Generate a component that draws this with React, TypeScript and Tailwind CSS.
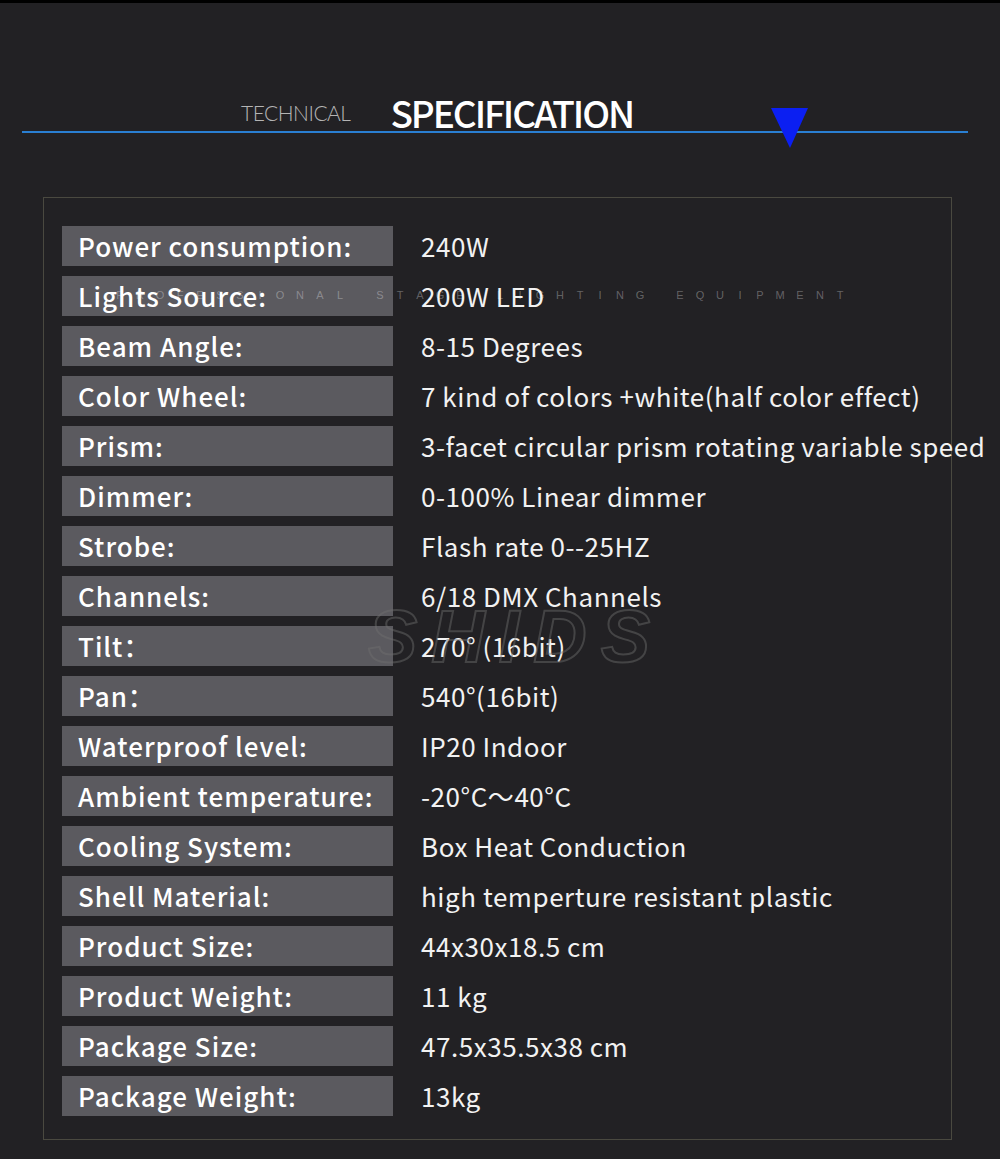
import React from "react";

const rows: [string, string][] = [
  ["Power consumption:", "240W"],
  ["Lights Source:", "200W LED"],
  ["Beam Angle:", "8-15 Degrees"],
  ["Color Wheel:", "7 kind of colors +white(half color effect)"],
  ["Prism:", "3-facet circular prism rotating variable speed"],
  ["Dimmer:", "0-100% Linear dimmer"],
  ["Strobe:", "Flash rate 0--25HZ"],
  ["Channels:", "6/18 DMX Channels"],
  ["Tilt：", "270° (16bit)"],
  ["Pan：", "540°(16bit)"],
  ["Waterproof level:", "IP20 Indoor"],
  ["Ambient temperature:", "-20°C～40°C"],
  ["Cooling System:", "Box Heat Conduction"],
  ["Shell Material:", "high temperture resistant plastic"],
  ["Product Size:", "44x30x18.5 cm"],
  ["Product Weight:", "11 kg"],
  ["Package Size:", "47.5x35.5x38 cm"],
  ["Package Weight:", "13kg"],
];

const wm = "PROFESSIONAL STAGE LIGHTING EQUIPMENT";

export default function App() {
  const font = { fontFamily: '"Noto Sans CJK SC", "Noto Sans", sans-serif' };
  return (
    <div className="relative w-[1000px] h-[1159px] bg-[#222124] overflow-hidden" style={font}>
      <div className="h-[3px] bg-black" />
      {/* header */}
      <div className="relative h-[194px]">
        <div className="flex items-end pt-[89px] h-[128px]">
          <span
            className="ml-[241px] text-[21px] leading-none text-[#b4b4b4] tracking-[-0.5px] mb-[8px]"
            style={{ fontFamily: 'Lato, "Open Sans", sans-serif', fontWeight: 300 }}
          >
            TECHNICAL
          </span>
          <span className="ml-[40px] text-[37px] font-medium leading-none text-white tracking-[-2.1px]">
            SPECIFICATION
          </span>
        </div>
        <div className="ml-[22px] w-[946px] h-[2px] bg-[#2a7fd2]" />
        <svg
          className="absolute left-[771px] top-[105px]"
          width="37"
          height="40"
          viewBox="0 0 37 40"
        >
          <polygon points="0,0 37,0 19,40" fill="#0b1ff2" />
        </svg>
      </div>
      {/* box */}
      <div className="ml-[43px] w-[909px] border border-[#4a4940] pt-[28px] pb-[23px]">
        <div className="flex flex-col gap-[10px]">
          {rows.map(([k, v]) => (
            <div key={k} className="flex h-[40px] items-center">
              <div className="ml-[18px] w-[331px] shrink-0 h-full bg-[#5b5a5f] flex items-center pl-[16px]">
                <span className="text-[26px] font-medium text-white leading-none tracking-[1px] whitespace-nowrap">{k}</span>
              </div>
              <span className="ml-[28px] shrink-0 text-[26px] text-[#f2f2f2] leading-none whitespace-nowrap tracking-[0.55px]">
                {v}
              </span>
            </div>
          ))}
        </div>
      </div>
      {/* watermark line */}
      <div className="absolute left-[110px] top-[288px] flex pointer-events-none text-[11px] leading-[14px] text-white/30" style={{ fontFamily: '"Liberation Sans", sans-serif' }}>
        {wm.split("").map((c, i) => (
          <span key={i} className="w-[20px] text-center">
            {c === " " ? "\u00a0" : c}
          </span>
        ))}
      </div>
      {/* SHIDS watermark */}
      <div
        className="absolute left-[368px] top-[600px] pointer-events-none text-[74px] font-black italic leading-none tracking-[14px] text-transparent [-webkit-text-stroke:2px_rgba(110,110,110,0.45)]"
        style={{ fontFamily: '"Liberation Sans", sans-serif' }}
      >
        SHIDS
      </div>
    </div>
  );
}
